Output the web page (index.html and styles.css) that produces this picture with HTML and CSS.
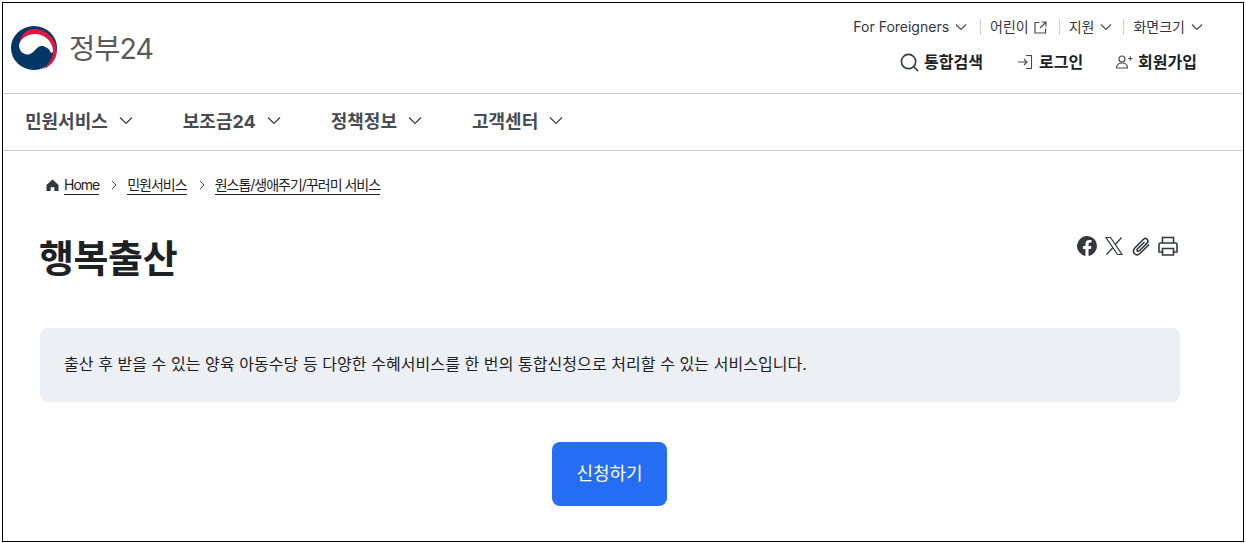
FILE: index.html
```html
<!DOCTYPE html>
<html lang="ko">
<head>
<meta charset="utf-8">
<title>행복출산 | 정부24</title>
<link rel="stylesheet" href="styles.css">
</head>
<body>
<div class="frame">
  <header class="header">
    <a class="logo" href="#">
      <svg class="logo-mark" viewBox="0 0 46 44" aria-hidden="true">
        <ellipse cx="23" cy="22" rx="23" ry="22" fill="#003764"/>
        <path d="M8,19 C9,9 15,3 23,3 C35,3 45.500,12 45.700,25 C45.800,33 40,40 32,43.600 C38,38 42,32 42,25 C42,15 33,8 24,8 C16,8 10,12 8,19Z" fill="#e5173f"/>
        <path d="M8,19 C10,12 16,8 24,8 C33,8 42,15 42,25 C42,26 41,27 40,27 C38,22 34,20 30.500,20 C26,20 24,26 19,28 C14,30 8,26 8,19Z" fill="#fff"/>
      </svg>
      <span class="logo-text">정부24</span>
    </a>
    <div class="utils">
      <ul class="util-top">
        <li class="util-first"><a href="#">For Foreigners</a><svg class="chev-s" viewBox="0 0 12 8"><path d="M1 1.500l5 5 5-5"/></svg></li>
        <li class="util-kids"><a href="#">어린이</a><svg class="ext" viewBox="0 0 13 13"><path d="M5.500 1.500H1v10.500h10.500V7.500M7.500 1h4.500v4.500M12 1L6 7"/></svg></li>
        <li><a href="#">지원</a><svg class="chev-s" viewBox="0 0 12 8"><path d="M1 1.500l5 5 5-5"/></svg></li>
        <li><a href="#">화면크기</a><svg class="chev-s" viewBox="0 0 12 8"><path d="M1 1.500l5 5 5-5"/></svg></li>
      </ul>
      <ul class="util-main">
        <li class="util-search"><svg class="ic-search" viewBox="0 0 20 20"><circle cx="9" cy="9" r="7.500"/><path d="M14.500 14.500l4.500 4.500"/></svg><a href="#">통합검색</a></li>
        <li><svg class="ic-line" viewBox="0 0 16 16"><path d="M1 8h9M7 5l3 3-3 3M9 1.500h5.500v13H9"/></svg><a href="#">로그인</a></li>
        <li><svg class="ic-line ic-join" viewBox="0 0 18 16"><circle cx="7" cy="5" r="3"/><path d="M1.500 14c0-3.500 2.500-5 5.500-5s5.500 1.500 5.500 5zM13 4.500h4.500M15.250 2.250v4.500"/></svg><a href="#">회원가입</a></li>
      </ul>
    </div>
  </header>
  <nav class="gnb">
    <a href="#">민원서비스<svg class="chev" viewBox="0 0 14 9"><path d="M1 1.500l6 6 6-6"/></svg></a>
    <a href="#">보조금24<svg class="chev" viewBox="0 0 14 9"><path d="M1 1.500l6 6 6-6"/></svg></a>
    <a href="#">정책정보<svg class="chev" viewBox="0 0 14 9"><path d="M1 1.500l6 6 6-6"/></svg></a>
    <a href="#">고객센터<svg class="chev" viewBox="0 0 14 9"><path d="M1 1.500l6 6 6-6"/></svg></a>
  </nav>
  <main class="main">
    <ol class="crumbs">
      <li><svg class="home" viewBox="0 0 14 13"><path d="M7 .5L.5 6.500V13H5V9h4v4h4.500V6.500z"/></svg><a href="#">Home</a></li>
      <li class="sep"><svg viewBox="0 0 6 10"><path d="M1 1l4 4-4 4"/></svg></li>
      <li><a href="#">민원서비스</a></li>
      <li class="sep"><svg viewBox="0 0 6 10"><path d="M1 1l4 4-4 4"/></svg></li>
      <li><a href="#">원스톱/생애주기/꾸러미 서비스</a></li>
    </ol>
    <div class="title-row">
      <h1>행복출산</h1>
      <div class="share">
        <svg viewBox="0 0 20 20"><path class="fill" d="M20 10a10 10 0 1 0-11.560 9.880v-6.990H5.900V10h2.540V7.800c0-2.510 1.490-3.890 3.780-3.890 1.090 0 2.240.2 2.240.2v2.460h-1.260c-1.240 0-1.630.77-1.630 1.560V10h2.770l-.44 2.890h-2.330v6.990A10 10 0 0 0 20 10z"/></svg>
        <svg viewBox="0 0 20 20"><path class="thin" d="M2 1.500h4.500l11.500 17h-4.500zM17.500 1.500L11 9M9 11.500L2.500 18.500"/></svg>
        <svg viewBox="0 0 20 20"><path class="stroke" d="M18 8.500L9.500 17c-2 2-4.500 2.200-6 .7C2 16.200 2 13.700 4 11.700L12 3.700c1.300-1.300 3-1.500 4.100-.4 1.100 1.100 1 2.800-.3 4.100L8.500 14.700c-.7.700-1.500.8-2.100.2-.6-.6-.5-1.400.2-2.100L13.500 6"/></svg>
        <svg viewBox="0 0 20 20"><path class="stroke" d="M4.500 7V1.500h11V7M4.500 16H1V8.500A1.500 1.500 0 0 1 2.500 7h15A1.500 1.500 0 0 1 19 8.500V16h-3.500M4.500 12.500h11v6.500h-11z"/></svg>
      </div>
    </div>
    <p class="desc">출산 후 받을 수 있는 양육 아동수당 등 다양한 수혜서비스를 한 번의 통합신청으로 처리할 수 있는 서비스입니다.</p>
    <div class="actions"><a class="btn" href="#">신청하기</a></div>
  </main>
</div>
</body>
</html>
```

FILE: styles.css
```css
* { box-sizing: border-box; }
html, body { margin: 0; padding: 0; background: #fff; }
body { font-family: Inter, "Noto Sans CJK KR", "Noto Sans", sans-serif; color: #1e2124; overflow: hidden; }
a { color: inherit; text-decoration: none; }
ul, ol { list-style: none; margin: 0; padding: 0; }

.frame { margin: 2px 2px 0 2px; height: 540px; border: 1px solid #000; overflow: hidden; }

.header { height: 91px; padding: 0 40px 0 8px; display: flex; justify-content: space-between; border-bottom: 1px solid #cdd1d5; }
.logo { display: flex; align-items: center; gap: 11px; }
.logo-mark { width: 46px; height: 44px; display: block; }
.logo-text { font-size: 28.500px; line-height: 34px; color: #5a5a5a; letter-spacing: -1px; padding: 2px 0 0 1px; }

.utils { display: flex; flex-direction: column; align-items: flex-end; padding-top: 14px; }
.util-top { display: flex; align-items: center; font-size: 14px; line-height: 20px; color: #33363d; }
.util-top li { display: flex; align-items: center; gap: 6px; padding: 0 11px 0 9px; }
.util-top li + li { border-left: 1px solid #cdd1d5; height: 16px; }
.util-top .util-first { padding-right: 13px; }
.util-top .util-kids { gap: 5px; padding-right: 12px; }
.util-top li:last-child { padding-right: 0; }
.chev-s { width: 12px; height: 8px; fill: none; stroke: #464c53; stroke-width: 1.200; }
.ext { width: 13px; height: 13px; fill: none; stroke: #464c53; stroke-width: 1.200; }

.util-main { display: flex; gap: 32px; margin-top: 13px; padding-right: 6px; font-size: 16px; line-height: 24px; font-weight: 700; color: #1e2124; }
.util-main li { display: flex; align-items: center; gap: 4px; }
.util-main .util-search { margin-right: 2px; }
.ic-search { width: 19px; height: 19px; margin-right: 1px; fill: none; stroke: #33363d; stroke-width: 1.700; }
.ic-line { width: 16px; height: 16px; fill: none; stroke: #464c53; stroke-width: 1.100; margin-right: 2px; }
.ic-join { width: 18px; margin-right: 1px; }

.gnb { height: 57px; padding: 0 0 4px 22px; display: flex; align-items: center; gap: 50px; border-bottom: 1px solid #cdd1d5; font-size: 18px; font-weight: 700; color: #464c53; }
.gnb a { display: flex; align-items: center; gap: 11px; }
.chev { width: 14px; height: 9px; fill: none; stroke: #33363d; stroke-width: 1.100; }

.main { padding: 0 63px 0 37px; }
.crumbs { display: flex; align-items: center; height: 24px; margin-top: 22px; padding-left: 6px; font-size: 14px; letter-spacing: -1px; color: #1e2124; }
.crumbs a { border-bottom: 1px solid #1e2124; line-height: 18px; display: block; }
.crumbs li { display: flex; align-items: center; }
.crumbs .home { width: 13px; height: 12px; margin-right: 5px; fill: #33363d; }
.crumbs .sep { padding: 0 10px 0 12px; }
.crumbs .sep svg { width: 6px; height: 10px; fill: none; stroke: #464c53; stroke-width: 1; display: block; }

.title-row { display: flex; justify-content: space-between; align-items: flex-start; margin-top: 33px; }
h1 { margin: 0 0 0 -1px; padding-bottom: 2px; font-size: 38px; line-height: 56px; font-weight: 700; color: #1e2124; letter-spacing: -0.400px; }
.share { display: flex; gap: 7px; padding: 6px 2px 0 0; }
.share svg { width: 20px; height: 20px; display: block; }
.share .fill { fill: #33363d; }
.share .stroke { fill: none; stroke: #33363d; stroke-width: 1.600; }
.share .thin { fill: none; stroke: #33363d; stroke-width: 1.200; }

.desc { margin: 40px 0 0; height: 74px; padding: 0 24px 2px; background: #eceff3; border-radius: 8px; font-size: 16px; line-height: 72px; letter-spacing: 0.065px; color: #1e2124; }
.actions { display: flex; justify-content: center; margin-top: 40px; padding-right: 1px; }
.btn { width: 115px; height: 64px; padding-bottom: 5px; display: flex; align-items: center; justify-content: center; background: #256ef4; border-radius: 8px; color: #fff; font-size: 18px; }
```
